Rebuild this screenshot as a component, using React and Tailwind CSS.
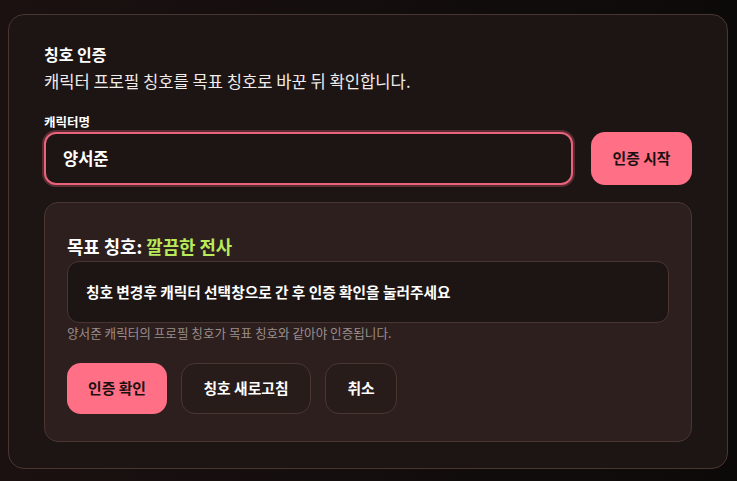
export default function App() {
  return (
    <div
      className="min-h-[481px] w-full bg-gradient-to-r from-[#1b1111] to-[#0c0a09] pt-[14px] pl-[8px] pr-[9px] pb-[13px]"
      style={{ fontFamily: '"Noto Sans CJK KR", "Noto Sans", sans-serif' }}
    >
      <div className="rounded-2xl border border-[#4a3631] bg-[#1c1514] px-[35px] pt-[27px] pb-[26px]">
        {/* 헤더 */}
        <h2 className="text-[16px] font-bold leading-[24px] text-white">칭호 인증</h2>
        <p className="mt-[3px] text-[16.6px] leading-[24px] text-[#f1ecea]">
          캐릭터 프로필 칭호를 목표 칭호로 바꾼 뒤 확인합니다.
        </p>

        {/* 캐릭터명 */}
        <label className="mt-[21px] block text-[12.5px] font-bold leading-[16px] text-white">
          캐릭터명
        </label>
        <div className="mt-[2px] flex gap-[18px]">
          <div className="flex h-[53px] flex-1 items-center rounded-xl border-2 border-[#e8637b] bg-[#1c1514] px-[17px] ring-2 ring-[#e8637b]/30">
            <input
              className="w-full bg-transparent text-[16.5px] font-bold text-white outline-none"
              defaultValue="양서준"
            />
          </div>
          <button className="h-[53px] w-[101px] rounded-[14px] bg-[#ff6f86] text-[14.8px] font-semibold text-[#1a1010]">
            인증 시작
          </button>
        </div>

        {/* 목표 칭호 패널 */}
        <div className="mt-[17px] rounded-[14px] border border-[#4a3631] bg-[#2c1f1e] px-[22px] pt-[30px] pb-[27px]">
          <h3 className="text-[17.8px] font-bold leading-[26px] text-white">
            목표 칭호: <span className="text-[#b9ea5a]">깔끔한 전사</span>
          </h3>
          <div className="mt-[2px] flex h-[62px] items-center rounded-xl border border-[#4a3631] bg-[#1c1514] px-[18px]">
            <span className="text-[14.7px] font-bold text-white">
              칭호 변경후 캐릭터 선택창으로 간 후 인증 확인을 눌러주세요
            </span>
          </div>
          <p className="mt-[1px] text-[12.6px] leading-[18px] text-[#9a8e8c]">
            양서준 캐릭터의 프로필 칭호가 목표 칭호와 같아야 인증됩니다.
          </p>
          <div className="mt-[21px] flex gap-[14px]">
            <button className="h-[51px] w-[100px] rounded-[14px] bg-[#ff6f86] text-[14.8px] font-semibold text-[#1a1010]">
              인증 확인
            </button>
            <button className="h-[51px] w-[130px] rounded-[14px] border border-[#4a3631] bg-[#281c1b] text-[14.8px] font-bold text-white">
              칭호 새로고침
            </button>
            <button className="h-[51px] w-[72px] rounded-[14px] border border-[#4a3631] bg-[#281c1b] text-[14.8px] font-bold text-white">
              취소
            </button>
          </div>
        </div>
      </div>
    </div>
  );
}
